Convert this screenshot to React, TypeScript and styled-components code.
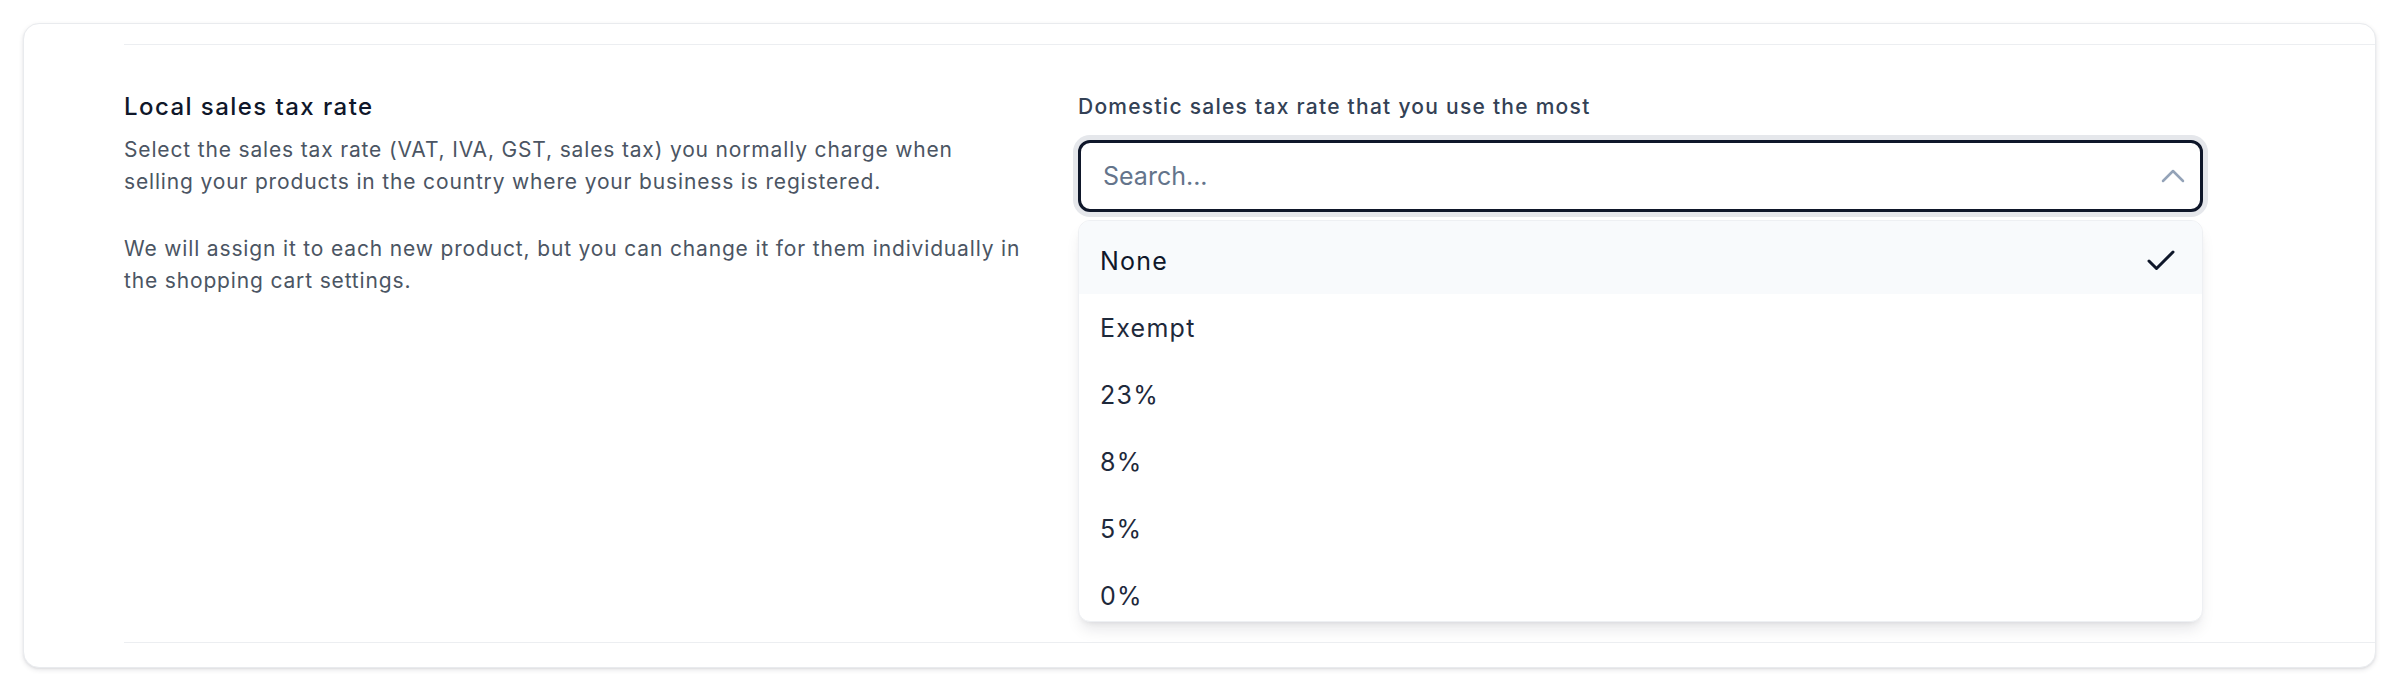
import React from "react";
import styled, { createGlobalStyle } from "styled-components";
import { Check, ChevronUp } from "lucide-react";

const GlobalStyle = createGlobalStyle`
	body {
		margin: 0;
		background-color: #ffffff;
		font-family: Inter, "Noto Sans", "Liberation Sans", sans-serif;
	}
`;

const StyledPage = styled.div`
	padding: 23px 24px 24px 23px;
`;

const StyledCard = styled.div`
	background-color: #ffffff;
	border: 1px solid #e9ebee;
	border-radius: 16px;
	box-shadow: 0 2px 5px rgba(15, 23, 42, 0.1), 0 1px 2px rgba(15, 23, 42, 0.06);
	padding: 20px 0 24px 100px;
`;

const StyledSection = styled.section`
	display: grid;
	grid-template-columns: 900px 1125px;
	column-gap: 54px;
	align-items: start;
	box-sizing: border-box;
	height: 599px;
	padding-top: 46px;
	border-top: 1px solid #eceef1;
	border-bottom: 1px solid #eceef1;
`;

const StyledInfo = styled.div`
	display: flex;
	flex-direction: column;
`;

const StyledTitle = styled.h3`
	margin: 0 0 11px;
	font-size: 24px;
	line-height: 32px;
	font-weight: 500;
	letter-spacing: 0.06em;
	color: #0f172a;
`;

const StyledText = styled.p`
	margin: 0;
	font-size: 21px;
	line-height: 32px;
	letter-spacing: 0.04em;
	color: #4b5563;

	& + & {
		margin-top: 35px;
	}
`;

const StyledField = styled.div`
	position: relative;
	display: flex;
	flex-direction: column;
`;

const StyledLabel = styled.label`
	font-size: 21px;
	line-height: 32px;
	font-weight: 500;
	letter-spacing: 0.06em;
	color: #334155;
	margin-bottom: 17px;
`;

const StyledInputBox = styled.div`
	display: flex;
	align-items: center;
	box-sizing: border-box;
	height: 72px;
	padding: 0 7px 0 22px;
	border: 3px solid #0f172a;
	border-radius: 12px;
	box-shadow: 0 0 0 5px #e5e7eb;
	background-color: #ffffff;
	color: #94a3b8;
`;

const StyledInput = styled.input`
	flex: 1;
	min-width: 0;
	border: none;
	outline: none;
	padding: 0;
	font-family: inherit;
	font-size: 25px;
	color: #0f172a;
	background: transparent;

	&::placeholder {
		color: #64748b;
	}
`;

const StyledOptions = styled.ul`
	position: absolute;
	top: 129px;
	left: 0;
	right: 0;
	height: 402px;
	margin: 0;
	padding: 0;
	list-style: none;
	overflow: hidden;
	box-sizing: border-box;
	background-color: #ffffff;
	border: 1px solid #eef0f3;
	border-radius: 12px;
	box-shadow: 0 10px 15px -3px rgba(15, 23, 42, 0.1),
		0 4px 6px -4px rgba(15, 23, 42, 0.1);
`;

const StyledOption = styled.li<{ $selected?: boolean }>`
	display: flex;
	align-items: center;
	justify-content: space-between;
	box-sizing: border-box;
	height: 67px;
	padding: 0 23px 0 21px;
	font-size: 25px;
	letter-spacing: 0.05em;
	color: ${(p) => (p.$selected ? "#0f172a" : "#1e293b")};
	background-color: ${(p) => (p.$selected ? "#f8fafc" : "transparent")};

	&:first-child {
		height: 73px;
		padding-top: 6px;
	}

	& svg {
		color: #0f172a;
	}
`;

const rates = ["None", "Exempt", "23%", "8%", "5%", "0%"];

const App: React.FC = () => {
	const [selected] = React.useState("None");

	return (
		<>
			<GlobalStyle />
			<StyledPage>
				<StyledCard>
					<StyledSection>
						<StyledInfo>
							<StyledTitle>Local sales tax rate</StyledTitle>
							<StyledText>
								Select the sales tax rate (VAT, IVA, GST, sales tax) you
								normally charge when selling your products in the country
								where your business is registered.
							</StyledText>
							<StyledText>
								We will assign it to each new product, but you can change it
								for them individually in the shopping cart settings.
							</StyledText>
						</StyledInfo>
						<StyledField>
							<StyledLabel>Domestic sales tax rate that you use the most</StyledLabel>
							<StyledInputBox>
								<StyledInput placeholder="Search..." />
								<ChevronUp size={40} strokeWidth={1.5} />
							</StyledInputBox>
							<StyledOptions>
								{rates.map((rate) => (
									<StyledOption key={rate} $selected={rate === selected}>
										<span>{rate}</span>
										{rate === selected && <Check size={36} strokeWidth={2} />}
									</StyledOption>
								))}
							</StyledOptions>
						</StyledField>
					</StyledSection>
				</StyledCard>
			</StyledPage>
		</>
	);
};

export default App;
